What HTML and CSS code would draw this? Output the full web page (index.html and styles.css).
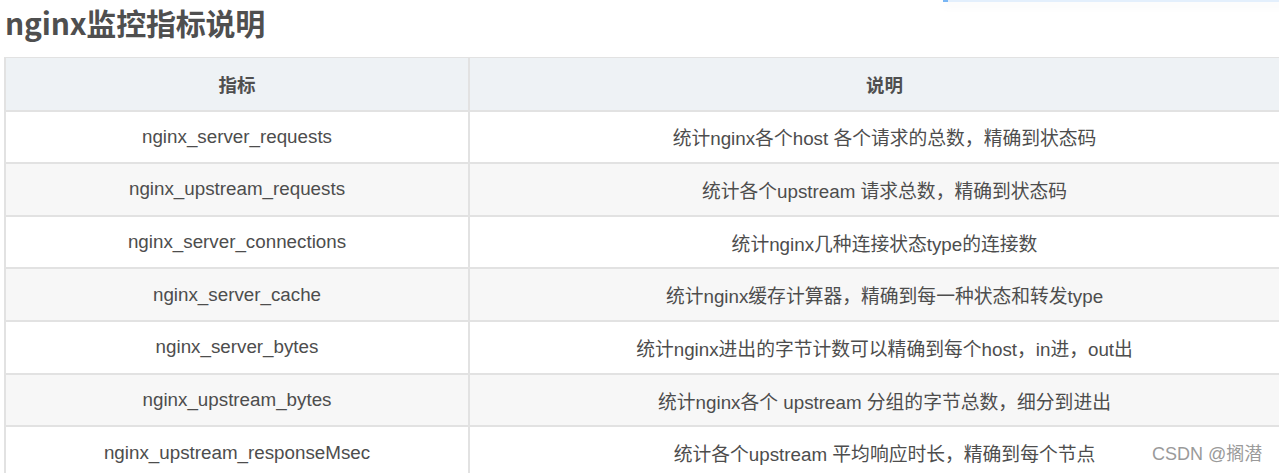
FILE: index.html
```html
<!DOCTYPE html>
<html lang="zh-CN">
<head>
<meta charset="utf-8">
<title>nginx监控指标说明</title>
<link rel="stylesheet" href="styles.css">
</head>
<body>
<div class="topbar"></div>
<main class="article">
  <h1 class="title">nginx监控指标说明</h1>
  <table class="metrics">
    <thead>
      <tr><th class="col-name">指标</th><th>说明</th></tr>
    </thead>
    <tbody>
      <tr><td>nginx_server_requests</td><td>统计nginx各个host 各个请求的总数，精确到状态码</td></tr>
      <tr><td>nginx_upstream_requests</td><td>统计各个upstream 请求总数，精确到状态码</td></tr>
      <tr><td>nginx_server_connections</td><td>统计nginx几种连接状态type的连接数</td></tr>
      <tr><td>nginx_server_cache</td><td>统计nginx缓存计算器，精确到每一种状态和转发type</td></tr>
      <tr><td>nginx_server_bytes</td><td>统计nginx进出的字节计数可以精确到每个host，in进，out出</td></tr>
      <tr><td>nginx_upstream_bytes</td><td>统计nginx各个 upstream 分组的字节总数，细分到进出</td></tr>
      <tr><td>nginx_upstream_responseMsec</td><td>统计各个upstream 平均响应时长，精确到每个节点</td></tr>
    </tbody>
  </table>
</main>
<div class="watermark">CSDN @搁潜</div>
</body>
</html>
```

FILE: styles.css
```css
html, body {
  margin: 0;
  padding: 0;
  background: #ffffff;
  overflow: hidden;
}
body {
  width: 1279px;
  height: 473px;
  position: relative;
  font-family: "Liberation Sans", "Noto Sans CJK SC", sans-serif;
  color: #4d4d4d;
}
.topbar {
  position: absolute;
  left: 943px;
  top: 0;
  width: 340px;
  height: 2px;
  background: #e3effc;
  border-left: 5px solid #79b6f4;
  box-shadow: 0 3px 10px rgba(0, 0, 0, 0.09);
}
.article {
  padding: 0 0 0 4px;
}
.title {
  margin: 0;
  padding: 0 0 0 1px;
  height: 57px;
  box-sizing: border-box;
  font-family: "Noto Sans CJK SC", "Liberation Sans", sans-serif;
  font-weight: 700;
  font-size: 30px;
  line-height: 44px;
  color: #4f4f4f;
  letter-spacing: -0.2px;
}
.metrics {
  border-collapse: collapse;
  width: 1297px;
  table-layout: fixed;
  font-size: 18.8px;
}
.metrics th,
.metrics td {
  border: 2px solid #e2e2e2;
  text-align: center;
  padding: 0 10px;
  color: #4d4d4d;
}
.metrics th {
  background: #eef2f5;
  font-family: "Noto Sans CJK SC", "Liberation Sans", sans-serif;
  font-weight: 700;
  color: #4f4f4f;
  font-size: 18.5px;
}
.metrics thead tr {
  height: 53px;
}
.metrics tbody tr {
  height: 52.67px;
}
.metrics .col-name {
  width: 442px;
}
.metrics thead th {
  border-top-width: 1px;
}
.metrics tbody tr:nth-child(even) td {
  background: #f7f7f7;
}
.watermark {
  position: absolute;
  left: 1152px;
  top: 442px;
  font-family: "Liberation Sans", "Noto Sans CJK SC", sans-serif;
  font-size: 18px;
  color: #9a9a9a;
  line-height: 24px;
}
```
